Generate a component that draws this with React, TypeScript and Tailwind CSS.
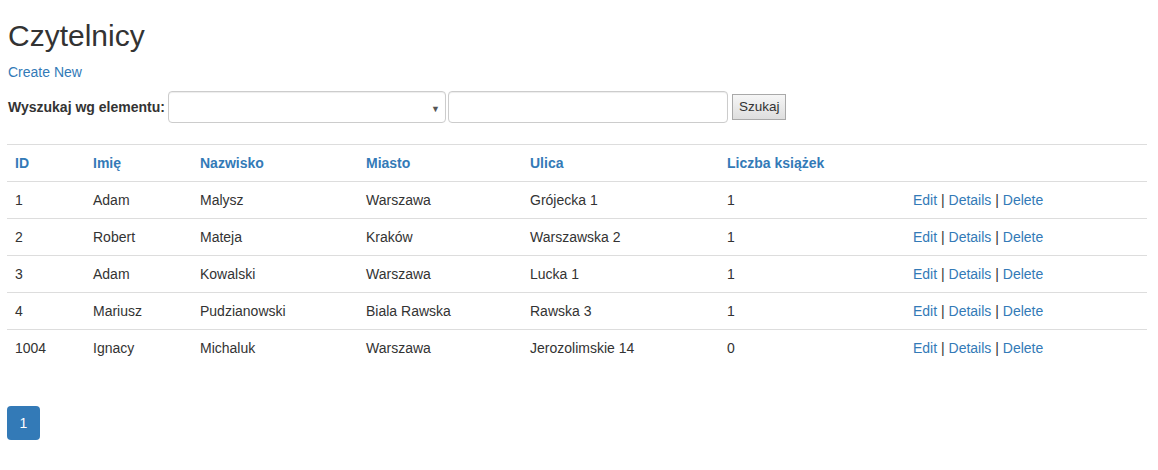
import React from "react"

const readers = [
  { id: 1, first: "Adam", last: "Malysz", city: "Warszawa", street: "Grójecka 1", books: 1 },
  { id: 2, first: "Robert", last: "Mateja", city: "Kraków", street: "Warszawska 2", books: 1 },
  { id: 3, first: "Adam", last: "Kowalski", city: "Warszawa", street: "Lucka 1", books: 1 },
  { id: 4, first: "Mariusz", last: "Pudzianowski", city: "Biala Rawska", street: "Rawska 3", books: 1 },
  { id: 1004, first: "Ignacy", last: "Michaluk", city: "Warszawa", street: "Jerozolimskie 14", books: 0 },
]

const headers = [
  { label: "ID", w: "w-[78px]" },
  { label: "Imię", w: "w-[107px]" },
  { label: "Nazwisko", w: "w-[166px]" },
  { label: "Miasto", w: "w-[164px]" },
  { label: "Ulica", w: "w-[197px]" },
  { label: "Liczba książek", w: "w-[186px]" },
  { label: "", w: "w-[242px]" },
]

export default function App() {
  return (
    <div className="min-h-[470px] bg-white px-[7px] text-[14px] leading-[20px] text-[#333] [font-family:'Liberation_Sans',Arial,sans-serif]">
      <h2 className="mt-[19px] mb-[10px] pl-px text-[30px] leading-[33px] font-normal">Czytelnicy</h2>
      <p className="mb-[9px] pl-px">
        <a href="#" className="text-[#337ab7]">Create New</a>
      </p>

      <form className="flex items-center pl-px" onSubmit={(e) => e.preventDefault()}>
        <label className="mr-[3px] font-bold">Wyszukaj wg elementu:</label>
        <div className="relative">
          <select className="h-[32px] w-[278px] appearance-none rounded-[4px] border border-[#ccc] bg-white px-3 shadow-[inset_0_1px_1px_rgba(0,0,0,0.075)]">
            <option></option>
          </select>
          <span className="pointer-events-none absolute right-[6px] top-[8px] text-[9px] text-[#555]">▼</span>
        </div>
        <input
          type="text"
          className="ml-[2px] h-[32px] w-[280px] rounded-[4px] border border-[#ccc] bg-white px-3 shadow-[inset_0_1px_1px_rgba(0,0,0,0.075)]"
        />
        <button
          type="submit"
          className="ml-[4px] h-[26px] border border-[#a9a9a9] bg-gradient-to-b from-[#f6f6f6] to-[#dedede] px-[6px] text-[13.5px] leading-[20px] text-[#333]"
        >
          Szukaj
        </button>
      </form>

      <table className="mt-[21px] mb-[20px] w-[1140px] table-fixed border-collapse border-t border-[#ddd]">
        <thead>
          <tr>
            {headers.map((h) => (
              <th key={h.label + h.w} className={`${h.w} border-b border-[#ddd] p-[8px] text-left font-bold text-[#337ab7]`}>
                {h.label}
              </th>
            ))}
          </tr>
        </thead>
        <tbody>
          {readers.map((r, i) => (
            <tr key={r.id} className={i < readers.length - 1 ? "border-b border-[#ddd]" : ""}>
              <td className="p-[8px]">{r.id}</td>
              <td className="p-[8px]">{r.first}</td>
              <td className="p-[8px]">{r.last}</td>
              <td className="p-[8px]">{r.city}</td>
              <td className="p-[8px]">{r.street}</td>
              <td className="p-[8px]">{r.books}</td>
              <td className="whitespace-nowrap p-[8px]">
                <a href="#" className="text-[#337ab7]">Edit</a> |{" "}
                <a href="#" className="text-[#337ab7]">Details</a> |{" "}
                <a href="#" className="text-[#337ab7]">Delete</a>
              </td>
            </tr>
          ))}
        </tbody>
      </table>

      <div className="pt-[20px] pb-[20px]">
        <span className="inline-flex h-[34px] w-[33px] items-center justify-center rounded-[4px] bg-[#337ab7] text-white">1</span>
      </div>
    </div>
  )
}
